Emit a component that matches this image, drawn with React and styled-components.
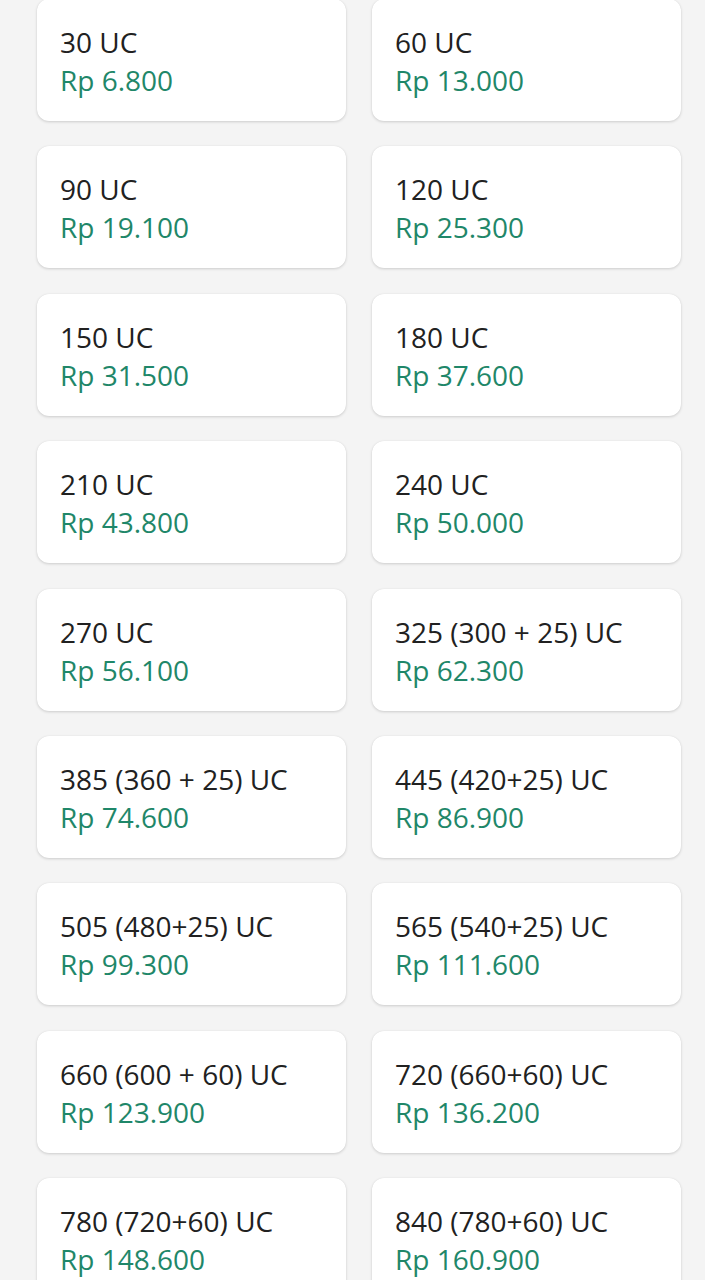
import React from 'react';
import styled, { createGlobalStyle } from 'styled-components';

const GlobalStyle = createGlobalStyle`
  html, body {
    margin: 0;
    padding: 0;
    background: #f4f4f4;
  }
  body {
    font-family: "Open Sans", "Noto Sans", sans-serif;
  }
`;

const StyledGrid = styled.div`
  display: grid;
  grid-template-columns: 309px 309px;
  column-gap: 26px;
  row-gap: 25.4px;
  padding: 0 24px 40px 37px;
  margin-top: -1px;
  height: 1281px;
  overflow: hidden;
`;

const StyledCard = styled.div`
  box-sizing: border-box;
  height: 122px;
  padding: 24px 23px 0;
  background: #fff;
  border-radius: 12px;
  box-shadow: 0 1px 3px rgba(0, 0, 0, 0.16), 0 0 1px rgba(0, 0, 0, 0.08);
`;

const Title = styled.div`
  color: #212121;
  font-size: 28px;
  font-weight: 500;
  line-height: 38px;
  white-space: nowrap;
`;

const Price = styled.div`
  color: #1f8769;
  font-size: 28px;
  line-height: 38px;
  white-space: nowrap;
`;

const items = [
  ['30 UC', 'Rp 6.800'],
  ['60 UC', 'Rp 13.000'],
  ['90 UC', 'Rp 19.100'],
  ['120 UC', 'Rp 25.300'],
  ['150 UC', 'Rp 31.500'],
  ['180 UC', 'Rp 37.600'],
  ['210 UC', 'Rp 43.800'],
  ['240 UC', 'Rp 50.000'],
  ['270 UC', 'Rp 56.100'],
  ['325 (300 + 25) UC', 'Rp 62.300'],
  ['385 (360 + 25) UC', 'Rp 74.600'],
  ['445 (420+25) UC', 'Rp 86.900'],
  ['505 (480+25) UC', 'Rp 99.300'],
  ['565 (540+25) UC', 'Rp 111.600'],
  ['660 (600 + 60) UC', 'Rp 123.900'],
  ['720 (660+60) UC', 'Rp 136.200'],
  ['780 (720+60) UC', 'Rp 148.600'],
  ['840 (780+60) UC', 'Rp 160.900'],
];

const App = () => (
  <>
    <GlobalStyle />
    <StyledGrid>
      {items.map(([uc, price]) => (
        <StyledCard key={uc}>
          <Title>{uc}</Title>
          <Price>{price}</Price>
        </StyledCard>
      ))}
    </StyledGrid>
  </>
);

export default App;
